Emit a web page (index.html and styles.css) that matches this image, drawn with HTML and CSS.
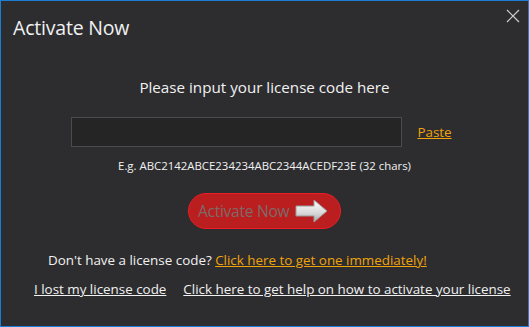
FILE: index.html
```html
<!DOCTYPE html>
<html lang="en">
<head>
    <meta charset="utf-8">
    <title>Activate Now</title>
    <link rel="stylesheet" href="styles.css">
</head>
<body>
    <div class="window">
        <header class="titlebar">
            <h1>Activate Now</h1>
            <div class="close">
                <svg width="14" height="14" viewBox="0 0 14 14">
                    <path d="M1 1 L13 13 M13 1 L1 13" stroke="#d0d0d0" stroke-width="1.2" fill="none"/>
                </svg>
            </div>
        </header>
        <main class="content">
            <p class="prompt">Please input your license code here</p>
            <div class="code_row">
                <input class="code" type="text">
                <a class="paste" href="#">Paste</a>
            </div>
            <p class="example">E.g. ABC2142ABCE234234ABC2344ACEDF23E (32 chars)</p>
            <button class="activate">Activate Now
                <svg width="34" height="24" viewBox="0 0 34 24">
                    <defs>
                        <linearGradient id="arrowfill" x1="0" y1="0" x2="0" y2="1">
                            <stop offset="0" stop-color="#ffffff"/>
                            <stop offset="0.6" stop-color="#d8d8d8"/>
                            <stop offset="1" stop-color="#a8a8a8"/>
                        </linearGradient>
                    </defs>
                    <path d="M1 7 H19 V1 L32 12 L19 23 V17 H1 Z" fill="url(#arrowfill)" stroke="#9a9a9a" stroke-width="1"/>
                </svg>
            </button>
            <p class="buy">Don't have a license code? <a href="#">Click here to get one immediately!</a></p>
            <div class="help_row">
                <a href="#">I lost my license code</a>
                <a href="#">Click here to get help on how to activate your license</a>
            </div>
        </main>
    </div>
</body>
</html>
```

FILE: styles.css
```css
html, body {
    margin: 0;
    padding: 0;
}

body {
    width: 529px;
    height: 327px;
    background-color: #2d2d30;
    font-family: "Open Sans", sans-serif;
    color: #f1f1f1;
}

.window {
    box-sizing: border-box;
    width: 529px;
    height: 327px;
    border: 1px solid #1a7fd4;
    display: flex;
    flex-direction: column;
}

.titlebar {
    display: flex;
    justify-content: space-between;
    align-items: flex-start;
    padding: 14px 8px 0 12px;
    height: 44px;
    box-sizing: border-box;
}

.titlebar h1 {
    margin: 0;
    font-size: 19.5px;
    font-weight: normal;
    line-height: 26px;
    letter-spacing: -0.2px;
}

.close {
    margin-top: -6px;
    line-height: 0;
}

.content {
    display: flex;
    flex-direction: column;
    align-items: center;
}

.prompt {
    margin: 32px 0 0;
    font-size: 15.2px;
    line-height: 20px;
}

.code_row {
    display: flex;
    align-items: center;
    margin-top: 20px;
    margin-right: 6px;
}

.code {
    box-sizing: border-box;
    width: 331px;
    height: 30px;
    margin: 0;
    background-color: #252526;
    border: 1px solid #4a4a4f;
    color: #f1f1f1;
    outline: none;
}

.paste {
    margin-left: 15px;
    font-size: 13.4px;
    color: #f0a30a;
}

.example {
    margin: 11px 0 0;
    font-size: 11.4px;
    line-height: 16px;
}

.activate {
    display: flex;
    align-items: center;
    gap: 6px;
    margin-top: 19px;
    width: 153px;
    height: 36px;
    padding: 0 0 0 9px;
    border: 1px solid #ee1c24;
    border-radius: 18px;
    background-color: #bb1e1e;
    color: #7c6a6a;
    font-family: "Open Sans", sans-serif;
    font-size: 15.6px;
    letter-spacing: -0.3px;
}

.buy {
    align-self: flex-start;
    margin: 22px 0 0 47px;
    font-size: 13.4px;
    line-height: 18px;
}

.buy a {
    color: #f0a30a;
}

.help_row {
    align-self: flex-start;
    display: flex;
    gap: 17px;
    margin: 11px 0 0 33px;
    font-size: 13.4px;
    line-height: 18px;
}

.help_row a {
    color: #f1f1f1;
}
```
